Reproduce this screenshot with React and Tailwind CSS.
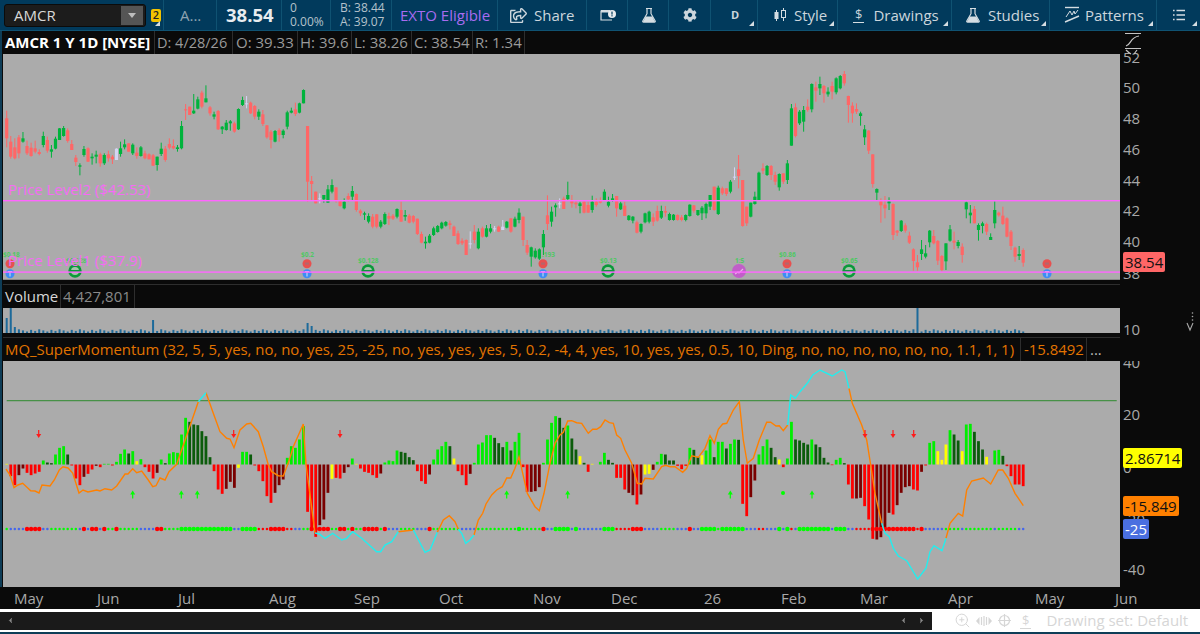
import React from "react";
import { FaCog, FaRegShareSquare } from "react-icons/fa";
import { ZoomIn, ChevronLeft, ChevronRight } from "lucide-react";

// bar spacing on the chart, same for price, volume and study
const barX = (i) => 6.7 + 4.066 * i;

// candle trace: colour, wick top, body top, body bottom, wick bottom (3x crop units)
const CANDLES = `
r 152 175 235 262 r 228 245 290 296 r 235 262 295 298 r 225 232 280 295 g 216 235 245 248 r 242 258 280 285
r 248 263 288 290 r 242 265 275 280 r 268 276 282 286 g 215 228 255 262 r 230 240 272 278 g 255 268 275 293
g 230 236 266 268 g 204 205 240 240 g 198 204 228 230 r 205 211 243 248 r 240 252 270 270 r 285 293 306 318
g 310 316 320 346 g 258 267 285 290 r 262 265 305 306 g 280 290 295 314 g 272 284 290 310 r 278 283 310 320
g 280 285 310 315 r 272 283 295 305 r 285 290 298 312 w 265 266 300 300 g 245 265 282 290 g 238 253 262 268
r 250 250 275 275 g 250 254 280 285 r 262 278 288 296 g 258 262 288 290 r 272 280 295 298 r 280 283 298 298
r 282 286 317 318 g 290 290 315 332 g 248 266 282 288 r 258 266 300 305 r 235 252 263 268 r 238 258 265 268
g 255 262 267 275 g 183 198 265 268 r 132 148 150 180 r 140 140 165 165 g 102 152 160 162 g 110 118 146 148
r 92 98 140 145 g 76 115 127 127 r 138 142 160 167 g 155 163 170 178 r 150 153 208 210 g 198 200 208 222
g 180 188 210 212 g 180 184 190 212 r 185 190 215 218 g 145 147 208 210 g 110 120 135 138 w 108 130 130 145
r 125 128 160 162 r 135 138 170 178 g 148 155 170 180 r 150 163 192 198 r 195 196 232 236 r 210 215 240 265
g 210 213 245 247 r 205 210 225 245 g 208 212 225 235 g 152 157 200 208 g 143 152 158 160 r 128 148 162 168
g 128 130 158 160 g 88 90 130 130 r 198 198 365 425 r 348 363 372 420 r 395 395 430 430 w 400 415 415 430
g 405 405 418 428 g 375 388 428 428 g 358 375 395 400 r 382 382 420 428 r 420 420 438 440 g 415 425 445 448
r 400 408 418 425 g 378 393 410 420 r 400 402 450 455 r 448 452 460 468 g 455 460 464 480 g 460 468 485 490
r 462 470 500 505 r 462 463 500 505 g 480 485 500 505 g 457 462 492 495 r 458 468 476 495 r 462 467 476 480
g 445 447 470 475 r 425 450 485 485 g 450 465 470 482 r 462 467 488 490 r 465 468 485 490 r 476 476 522 525
r 515 522 548 550 g 530 545 550 566 g 522 527 548 550 g 500 505 525 528 g 495 498 516 518 g 485 488 505 508
g 483 486 497 500 r 482 490 495 508 r 497 500 528 528 r 512 520 552 555 r 535 542 550 555 r 538 540 585 585
w 514 550 550 566 r 495 515 540 550 g 505 515 565 568 r 500 505 530 533 g 495 505 530 532 g 492 505 515 520
w 498 505 505 515 r 497 500 515 516 w 480 500 510 510 g 483 485 503 505 r 475 475 515 518 g 470 476 500 502
g 445 458 480 490 r 470 470 540 558 r 540 555 578 585 g 560 562 590 620 g 565 572 592 596 g 565 568 596 600
g 510 522 562 585 r 406 466 492 510 g 440 455 485 500 g 430 436 442 470 w 415 430 432 445 r 410 416 447 447
g 365 405 417 420 r 405 420 430 443 r 420 428 433 445 g 425 430 438 460 r 422 425 458 460 r 425 435 458 458
g 407 425 450 458 r 415 425 435 440 r 412 420 428 430 g 388 395 420 423 g 410 425 437 442 g 402 415 420 425
r 408 408 445 470 g 425 430 448 450 r 425 437 468 468 g 465 467 480 482 g 468 470 482 490 r 482 487 518 520
g 490 492 515 520 g 458 460 487 490 g 452 455 485 490 r 460 472 485 498 r 437 453 482 485 g 437 453 473 477
r 438 453 458 470 g 458 462 480 482 g 462 464 480 482 r 463 465 480 482 r 465 472 480 484 g 463 465 480 484
g 433 434 468 470 r 435 436 452 458 g 450 450 465 468 g 438 443 460 480 g 428 432 460 475 g 405 405 440 450
r 380 380 450 452 g 377 383 462 465 r 380 385 400 405 r 385 385 402 408 g 360 365 395 400 w 322 350 350 360
r 285 328 348 385 r 360 360 498 500 r 440 440 490 498 g 428 428 470 472 g 395 410 432 434 g 335 338 420 420
r 310 325 332 342 g 315 318 345 348 r 315 318 345 360 r 335 345 365 375 g 340 342 382 392 r 340 340 365 372
g 300 310 360 372 g 132 145 257 257 r 130 142 228 232 g 150 155 190 195 g 138 150 185 215 r 118 140 150 155
g 70 72 148 157 r 65 82 92 125 g 50 72 85 105 r 75 78 100 128 g 82 95 103 110 r 65 78 95 118
g 52 55 97 103 g 45 48 85 88 r 33 42 70 77 r 107 108 135 188 r 127 137 160 188 r 130 147 155 162
g 155 160 168 197 g 195 208 232 255 r 210 212 272 282 r 283 283 372 383 g 385 387 398 420 r 415 424 436 488
r 408 434 445 475 g 412 424 430 450 r 430 432 525 540 r 510 512 518 528 g 480 482 513 516 r 490 496 512 518
r 515 527 548 552 r 565 568 603 632 r 585 607 622 632 g 540 568 582 600 g 555 580 590 595 g 510 512 547 562
r 510 528 550 553 r 540 543 602 615 r 585 588 630 634 g 550 550 604 630 g 495 508 542 545 r 515 542 548 568
g 540 546 558 565 r 550 560 585 608 g 425 427 448 475 g 435 458 466 490 r 438 447 490 490 g 490 495 510 542
g 485 490 498 520 r 488 492 515 525 g 520 531 540 540 g 424 450 490 505 r 455 458 466 470 r 440 467 492 495
r 472 475 530 532 r 510 515 558 570 r 560 563 590 605 g 558 582 588 600 r 565 570 608 620
`.trim().split(/\s+/);

const CANDLE_COLORS = { r: "#ff6666", g: "#00b33c", w: "#d4d4f4" };
const toPriceY = (z) => 60 + Number(z) / 3;

const candles = [];
for (let n = 0; n < CANDLES.length; n += 5) {
  candles.push({
    color: CANDLE_COLORS[CANDLES[n]],
    wickTop: toPriceY(CANDLES[n + 1]),
    top: toPriceY(CANDLES[n + 2]),
    bottom: toPriceY(CANDLES[n + 3]),
    wickBottom: toPriceY(CANDLES[n + 4]),
  });
}

// histogram: colour letter + signed height in crop units
const HIST = `
Y2 R-35 R-62 D-32 D-12 R-25 R-32 R-27 R-22 G12
K6 K4 G30 G50 G55 K30 R-3 R-42 R-62 D-37
R-28 R-15 D-4 R-8 G2 G2 R-3 G8 G32 G45
K33 G40 Y10 G16 R-8 R-22 R-42 D-25 G15 K4
G33 G37 G35 G90 G140 K128 K120 K118 K100 K85
K22 R-20 R-75 R-88 D-73 D-52 D-70 Y-10 G38 G38
K30 R-3 R-20 R-50 R-95 R-115 D-85 D-62 D-45 G20
G55 G50 G75 G115 R-142 R-197 R-217 D-182 D-165 D-85
Y-43 R-40 R-42 D-25 D-8 G18 Y2 R-12 R-22 R-25
R-32 R-40 D-27 G6 G12 G10 G42 K38 K35 K22
K13 R-20 R-50 R-58 D-30 G15 G45 G55 G68 K55
Y18 R-20 R-32 R-62 D-28 G5 G60 G66 G88 G88
K80 K64 K52 G68 K42 G68 G95 R-8 R-82 D-82
D-80 D-68 G5 G75 G125 G145 K140 K110 G117 K78
K45 Y25 K5 R-22 Y2 G0 G8 G35 K14 K5
R-40 R-40 R-75 D-85 D-92 R-120 D-90 Y-30 Y-28 D-16
G8 G32 K30 K12 K12 R-4 R-14 R-4 G50 K44
K22 Y28 G42 G75 K22 G68 G68 K48 G62 G75
K74 R-118 R-155 D-98 D-48 G30 G55 G75 K50 K22
Y15 R-8 G18 G128 K75 K72 K65 K60 G75 K60
K52 K20 K6 R-2 G14 G20 K4 R-60 R-102 D-102
D-100 R-125 R-165 R-223 D-225 D-218 D-195 D-145 R-150 D-122
D-85 D-68 D-65 R-75 R-78 D-22 R-3 G65 G70 Y40
Y14 Y60 G103 K90 K72 Y40 G120 G122 K98 K70
K45 Y23 G0 G42 G44 K26 R-5 R-35 R-60 R-60
R-65
`.trim().split(/\s+/);

const HIST_COLORS = { G: "#00ee00", K: "#0b5c0b", R: "#ff0000", D: "#7a0000", Y: "#ffff00" };

// zero-line dots: ranges of bars, lower case small, upper case big
const DOT_RANGES = [
  [0, 0, "g"], [1, 4, "b"], [5, 8, "R"], [9, 10, "b"], [11, 17, "g"], [18, 18, "b"], [19, 19, "R"], [20, 20, "b"],
  [21, 22, "R"], [23, 23, "b"], [24, 24, "R"], [25, 26, "g"], [27, 27, "R"], [28, 32, "g"], [33, 36, "b"],
  [37, 38, "R"], [39, 42, "g"], [43, 55, "G"], [56, 57, "b"], [58, 61, "G"], [62, 64, "r"], [65, 68, "R"],
  [69, 70, "r"], [71, 72, "b"], [73, 74, "g"], [75, 79, "R"], [80, 81, "g"], [82, 83, "R"], [84, 84, "g"],
  [85, 85, "R"], [86, 87, "g"], [88, 91, "R"], [92, 92, "g"], [93, 93, "R"], [94, 96, "b"], [97, 100, "g"],
  [101, 103, "b"], [104, 104, "R"], [105, 111, "g"], [112, 115, "b"], [116, 125, "g"], [126, 126, "G"],
  [127, 131, "g"], [132, 132, "R"], [133, 134, "b"], [135, 138, "G"], [139, 139, "b"], [140, 140, "G"],
  [141, 146, "b"], [147, 149, "G"], [150, 153, "r"], [154, 156, "R"], [157, 160, "b"], [161, 164, "g"],
  [165, 167, "b"], [168, 168, "R"], [169, 170, "b"], [171, 174, "G"], [175, 175, "g"], [176, 181, "G"],
  [182, 184, "b"], [185, 186, "r"], [187, 189, "b"], [190, 190, "G"], [191, 191, "b"], [192, 192, "G"],
  [193, 193, "r"], [194, 194, "b"], [195, 202, "G"], [203, 203, "b"], [204, 206, "G"], [207, 208, "b"],
  [209, 212, "r"], [213, 223, "R"], [224, 224, "r"], [225, 225, "R"], [226, 230, "b"], [231, 234, "g"],
  [235, 235, "b"], [236, 242, "g"], [243, 243, "b"], [244, 248, "g"], [249, 250, "b"],
];
const DOT_COLORS = { g: "#00ff00", b: "#4466ee", r: "#ff0000" };

const dots = [];
DOT_RANGES.forEach(([from, to, kind]) => {
  for (let i = from; i <= to; i++) {
    const lower = kind.toLowerCase();
    dots.push({ i, color: DOT_COLORS[lower], big: kind !== lower });
  }
});

// study line pieces, picture coordinates
const ORANGE_LINES = [
  "6,469 10,475 14,487.7 18,485 22.7,483.3 26.7,487 30.7,490.7 35,491 39,493 42,485 50,486 54.3,480 59.3,470 63,466.7 68,468 72.7,473 79,493 83,490 88,492 96.7,490 100,491 105,488.7 111.7,490 116.7,486 125,474 128,474 132.7,468.7 136.7,472.7 141.7,471 148.3,480 152.7,486.7 156,485.7 160,478 165,480 169,471.7 176.7,464.3 198.3,401.7",
  "206,392.7 213.3,413.3 220,431.7 226.7,438.3 230,439 234,447.7 240,430 246.7,424 250.7,423.3 258.3,431.7 263.3,446.7 268.3,465 271.7,471.7 278.3,475.7 283.3,476 289.3,460 293.3,446.7 303.3,424 306,464.3 315,533",
  "398.3,531.7 413.3,530",
  "437.3,532.3 443.3,520 449.3,515.7 455,521.7 458.3,529.3",
  "474,535 478.3,520 482.7,513.3 486,504 491.7,495 496.7,490 502.3,486.7 506.7,478 510.7,478 515,468.3 519,456.7 522.7,473.3 527.3,493.3 535,506.7 539.3,510.7 544,493.3 550,463.3 555,443.3 560,435 563.3,432.3 567.7,421 571.7,420.7 576.7,422.7 581.7,423.3 588.3,433.3 592.7,429.3 596.7,429.3 600.7,426.7 605,420 609.3,422.7 613.3,423.3 616.7,435 620.7,438.3 625,450 631.7,463.3 637.3,483.3 641.7,484 645,478.3 653.3,479 661.7,466.7 665.7,465.3 670,466.7 675,466.7 682.7,472.3 686.7,468.3 691.7,455.7 698.3,457.3 705,448.3 710,435.7 714.3,443.3 718.3,429.3 722.7,424 726.7,423.3 733.3,410 739.3,401.7 743.3,440 747.3,463.3 753.3,458.3 759.3,440 766.7,422.3 770.7,422.3 776,426 779.3,425.7 783.3,430.7 787.7,425",
  "849,388.3 852.3,403.3 861.7,425 866.7,440 870.7,465 875,493.3 881.7,523.3",
  "946,538.3 950,523.3 958.3,513.3 962.7,516 966.7,490 971.7,481 983.3,478 990.7,484 998.3,470 1002.7,470 1008.3,478.3 1015,493.3 1023.3,505.7",
];
const CYAN_LINES = [
  "198.3,401.7 206,392.7",
  "315,533 319.3,534 325,538.3 332.7,533.3 341.7,540 346.7,538.3 352.7,531.7 361.7,538.3 376.7,551.7 380.7,551.7 385,545 391.7,541.7 398.3,531.7",
  "413.3,530 425,552.3 430,550 437.3,532.3",
  "458.3,529.3 461.7,533.3 465.7,543.3 470,540 474,535",
  "787.7,425 790.7,395 795.3,398.3 800,391.7 807.3,383.3 812.7,375 820,370 832.3,376 841.7,370 845,371.7 849,388.3",
  "881.7,523.3 885,533.3 889.3,536.7 893.3,548.3 898.3,556 906.7,560.7 917.7,579 926,568.3 930,551.7 934,545.7 942,550.7 946,538.3",
];

const volumeHeight = (i) => {
  const spikes = { 0: 15, 1: 25, 2: 6, 36: 13, 74: 10, 75: 7, 224: 25 };
  if (spikes[i]) return spikes[i];
  return 1.5 + ((i * 13) % 5) * 0.55;
};

const MONTHS = [
  ["May", 14], ["Jun", 97], ["Jul", 178], ["Aug", 269], ["Sep", 354], ["Oct", 439], ["Nov", 533],
  ["Dec", 611], ["26", 704], ["Feb", 781], ["Mar", 860], ["Apr", 948], ["May", 1035], ["Jun", 1115],
];

const AXIS_LABELS = [
  ["52", 63], ["50", 93], ["48", 124], ["46", 155], ["44", 186], ["42", 216], ["40", 247], ["38", 279],
  ["10", 335], ["40", 368], ["20", 420], ["0", 473], ["-20", 525], ["-40", 575],
];

const Corner = () => (
  <svg className="absolute bottom-[4px] right-[3px]" width="5" height="5" viewBox="0 0 5 5">
    <path d="M5 0V5H0Z" fill="#d5dde2" />
  </svg>
);

const Flask = ({ size = 16 }) => (
  <svg width={size} height={size} viewBox="0 0 16 16">
    <path d="M5 1.5h6M6 1.5v5.2L1.8 14a.8.8 0 0 0 .7 1.2h11a.8.8 0 0 0 .7-1.2L10 6.7V1.5" fill="none" stroke="#d5dde2" strokeWidth="1.2" />
    <path d="M4.6 9.5h6.8l2.6 5.5H2Z" fill="#d5dde2" />
  </svg>
);

const ToolCell = ({ className, children }) => (
  <div className={`relative flex h-full shrink-0 items-center border-r border-[#0f5272] ${className}`}>
    {children}
  </div>
);

const Legend = ({ className, children }) => (
  <div className={`flex h-full shrink-0 items-center whitespace-nowrap border-r border-[#2e2e2e] ${className}`}>{children}</div>
);

const PriceChart = () => (
  <svg className="block" width="1117" height="225" viewBox="3 54 1117 225">
    {candles.map((c, i) => (
      <g key={i}>
        <rect x={barX(i) - 0.5} y={c.wickTop} width="1" height={c.wickBottom - c.wickTop} fill={c.color} />
        <rect x={barX(i) - 1.6} y={c.top} width="3.2" height={Math.max(c.bottom - c.top, 1)} fill={c.color} />
      </g>
    ))}

    {/* dividend / earnings markers */}
    {[10, 307, 543, 787, 1047].map((x) => (
      <g key={x}>
        <circle cx={x} cy="263.7" r="4.5" fill="#e8504f" />
        <rect x={x - 2} y="262.5" width="4" height="2.2" fill="#b5656a" />
        <circle cx={x} cy="273.7" r="4.5" fill="#3f8cf5" />
        <path d={`M${x - 2} 271.5h4M${x} 271.5v5`} stroke="#bcd2ee" strokeWidth="1.2" />
      </g>
    ))}
    {[75, 368, 608, 849].map((x) => (
      <g key={x}>
        <circle cx={x} cy="271" r="6.7" fill="#0a9a3a" />
        <circle cx={x} cy="271" r="4" fill="#a5c4ab" />
        <rect x={x - 5} y="270" width="10" height="2" fill="#0a9a3a" />
      </g>
    ))}
    <circle cx="739" cy="271" r="7" fill="#c15ec9" />
    <path d="M735 274l3-2 1 1 4-4" fill="none" stroke="#e4b6e6" strokeWidth="1.2" />

    <g fill="#4fc864" fontSize="6.5" fontWeight="700">
      <text x="3" y="257">$0.18</text>
      <text x="66" y="263">$0.128</text>
      <text x="301" y="257">$0.2</text>
      <text x="358" y="263">$0.128</text>
      <text x="542" y="257">.193</text>
      <text x="600" y="263">$0.13</text>
      <text x="735" y="263">1:5</text>
      <text x="779" y="257">$0.86</text>
      <text x="841" y="263">$0.65</text>
    </g>

    <rect x="3" y="200" width="1117" height="1.4" fill="#ff66ff" />
    <rect x="3" y="271.4" width="1117" height="1.4" fill="#ff66ff" />
    <text x="8" y="195" fontSize="15" fill="#f46cf4">Price Level2 ($42.53)</text>
    <text x="8" y="266" fontSize="15" fill="#f46cf4">Price Level1 ($37.9)</text>
  </svg>
);

const VolumeChart = () => (
  <svg className="block" width="1117" height="25" viewBox="3 308 1117 25">
    {candles.map((_, i) => (
      <rect key={i} x={barX(i) - 1} y={333 - volumeHeight(i)} width="2" height={volumeHeight(i)} fill="#1d6a9a" />
    ))}
  </svg>
);

const StudyChart = () => (
  <svg className="block" width="1117" height="226" viewBox="3 361 1117 226">
    <rect x="6.7" y="400.2" width="1110" height="1" fill="#2e8b2e" />

    {HIST.map((token, i) => {
      const value = Number(token.slice(1)) / 3;
      return (
        <rect
          key={i}
          x={barX(i) - 1.4}
          y={value > 0 ? 464.5 - value : 464.5}
          width="2.8"
          height={Math.abs(value)}
          fill={HIST_COLORS[token[0]]}
        />
      );
    })}

    {dots.map((d) => (
      <circle key={d.i} cx={barX(d.i)} cy="529" r={d.big ? 2.2 : 1.25} fill={d.color} />
    ))}
    <circle cx="783" cy="493" r="2" fill="#00ff00" />

    {ORANGE_LINES.map((points) => (
      <polyline key={points} points={points} fill="none" stroke="#ff8000" strokeWidth="1.4" />
    ))}
    {CYAN_LINES.map((points) => (
      <polyline key={points} points={points} fill="none" stroke="#22eeee" strokeWidth="1.4" />
    ))}

    {/* sell arrows */}
    {[38.7, 233.7, 340, 865, 893, 913.7].map((x) => (
      <path key={x} d={`M${x - 0.6} 430h1.2v4h1.9l-2.5 4-2.5-4h1.9z`} fill="#ff1a1a" />
    ))}
    {/* buy arrows */}
    {[132.7, 181.3, 197.3, 506.7, 567.7, 730.3, 812].map((x) => (
      <path key={x} d={`M${x - 0.6} 498.5h1.2v-4h1.9l-2.5-4-2.5 4h1.9z`} fill="#00ff00" />
    ))}
  </svg>
);

const RightAxis = () => (
  <svg className="block" width="80" height="556" viewBox="1120 31 80 556">
    {AXIS_LABELS.map(([label, y]) => (
      <text key={label + y} x="1123" y={y} fontSize="15" fill="#a8a8a8">
        {label}
      </text>
    ))}
    {/* clip labels at the panel edges */}
    <rect x="1120" y="31" width="80" height="21" fill="#0a0a0a" />
    <rect x="1120" y="335" width="80" height="26" fill="#0a0a0a" />

    <g fill="none" stroke="#c4c4c4" strokeWidth="1.2">
      <path d="M1125 33.5h16M1125 48.5h16M1126 46c5-1 4-9 13-10" />
      <path d="M1126 50c2 2 3 3 5 4M1134 54l3-4" />
    </g>

    <g fill="none" stroke="#a8a8a8" strokeWidth="1.1">
      <path d="M1187 323l3 7 3-7" />
    </g>
    <g fill="#a8a8a8">
      <circle cx="1192.5" cy="313" r="0.8" />
      <circle cx="1192.5" cy="316.5" r="0.8" />
      <circle cx="1192.5" cy="320" r="0.8" />
    </g>
  </svg>
);

const AxisBadge = ({ className, children }) => (
  <div className={`absolute left-[3px] flex h-[20px] items-center rounded-[2px] px-[2px] text-[15px] leading-none ${className}`}>
    {children}
  </div>
);

export default function App() {
  return (
    <div className="flex h-[634px] w-[1200px] flex-col overflow-hidden bg-[#0a0a0a] font-['Open_Sans',sans-serif]">

      {/* ===== Toolbar ===== */}
      <div className="flex h-[31px] shrink-0 items-center border-b border-[#0f5272] bg-[#013a5c] text-[#ccd6dd]">
        <ToolCell className="w-[164px] pl-[4px]">
          <div className="flex h-[23px] w-[142px] items-center justify-between rounded-[3px] border border-[#0b0b0b] bg-[#1c1c1c] pl-[9px] pr-[2px]">
            <span className="text-[15px] text-[#d8d8d8]">AMCR</span>
            <div className="flex h-[19px] w-[22px] items-center justify-center bg-[#555555]">
              <span className="border-x-[4px] border-t-[5px] border-x-transparent border-t-[#bdbdbd]" />
            </div>
          </div>
          <span className="ml-[5px] flex h-[13px] w-[10px] items-center justify-center rounded-[2px] bg-[#f2c200] text-[11px] font-semibold text-[#222]">
            2
          </span>
          <Corner />
        </ToolCell>
        <ToolCell className="w-[53px] pl-[16px] text-[15px] text-[#8ea3b1]">A...</ToolCell>
        <ToolCell className="w-[65px] pl-[9px] text-[18.5px] font-bold text-[#e8ecef]">38.54</ToolCell>
        <ToolCell className="w-[49px] flex-col !items-start justify-center pl-[8px] text-[12px] leading-[14px] text-[#b5c2cb]">
          <span>0</span>
          <span>0.00%</span>
        </ToolCell>
        <ToolCell className="w-[61px] flex-col !items-start justify-center pl-[9px] text-[12px] leading-[14px] text-[#b5c2cb]">
          <span>B: 38.44</span>
          <span>A: 39.07</span>
        </ToolCell>
        <ToolCell className="w-[106px] pl-[8px] text-[15px] text-[#a86cf0]">EXTO Eligible</ToolCell>
        <ToolCell className="w-[89px] pl-[12px] text-[15px]">
          <FaRegShareSquare size={17} />
          <span className="ml-[7px]">Share</span>
        </ToolCell>
        <ToolCell className="w-[41px] pl-[13px]">
          <svg width="16" height="14" viewBox="0 0 16 14">
            <path d="M1 2.5h9M1 2.5v9.5h11" fill="none" stroke="#d5dde2" strokeWidth="1.2" />
            <rect x="1" y="2" width="8" height="2.5" fill="#d5dde2" />
            <circle cx="12" cy="6" r="4" fill="#e8ecef" />
            <rect x="11.4" y="3.6" width="1.2" height="3" fill="#013a5c" />
            <rect x="11.4" y="7.2" width="1.2" height="1.2" fill="#013a5c" />
          </svg>
        </ToolCell>
        <ToolCell className="w-[41px] pl-[13px]">
          <Flask />
        </ToolCell>
        <ToolCell className="w-[42px] pl-[14px]">
          <FaCog size={14} />
        </ToolCell>
        <ToolCell className="w-[47px] pl-[20px] text-[11px] font-bold">
          D
          <Corner />
        </ToolCell>
        <ToolCell className="w-[80px] pl-[15px] text-[15px]">
          <svg width="14" height="16" viewBox="0 0 14 16">
            <path d="M3.5 3v11M10.5 1v13" stroke="#d5dde2" strokeWidth="1" />
            <rect x="1.5" y="5" width="4" height="7" fill="#d5dde2" />
            <rect x="8.5" y="3.5" width="4" height="7" fill="#013a5c" stroke="#d5dde2" />
          </svg>
          <span className="ml-[7px]">Style</span>
          <Corner />
        </ToolCell>
        <ToolCell className="w-[114px] pl-[15px] text-[15px]">
          <span className="border-b border-[#d5dde2] px-[2px] text-[13px] leading-[15px]">$</span>
          <span className="ml-[9px]">Drawings</span>
          <Corner />
        </ToolCell>
        <ToolCell className="w-[98px] pl-[13px] text-[15px]">
          <Flask />
          <span className="ml-[7px]">Studies</span>
          <Corner />
        </ToolCell>
        <ToolCell className="w-[107px] pl-[14px] text-[15px]">
          <svg width="16" height="18" viewBox="0 0 16 18">
            <path d="M1 1.5h14" stroke="#d5dde2" strokeWidth="1.4" />
            <path d="M2 11l4-6 2 4 2-4 1 3 3-4" fill="none" stroke="#d5dde2" strokeWidth="1" />
            <path d="M1 16l14-6" stroke="#d5dde2" strokeWidth="1.4" />
          </svg>
          <span className="ml-[5px]">Patterns</span>
          <Corner />
        </ToolCell>
        <div className="relative flex h-full flex-1 items-center pl-[16px]">
          <svg width="12" height="12" viewBox="0 0 12 12">
            <path d="M0 1.5h1.6M0 6h1.6M0 10.5h1.6M3.5 1.5H12M3.5 6H12M3.5 10.5H12" stroke="#d5dde2" strokeWidth="1.3" />
          </svg>
          <Corner />
        </div>
      </div>

      {/* ===== Chart panels + price axis ===== */}
      <div className="flex h-[556px] shrink-0">
        <div className="w-[2px] shrink-0 bg-[#0e3d57]" />
        <div className="flex w-[1118px] shrink-0 flex-col pl-[1px]">

          <div className="flex h-[23px] shrink-0 items-center text-[15px] text-[#9a9a9a]">
            <Legend className="w-[152px] pl-[2px] font-bold text-white">AMCR 1 Y 1D [NYSE]</Legend>
            <Legend className="w-[78px] pl-[2px] text-[14.5px]">D: 4/28/26</Legend>
            <Legend className="w-[65px] pl-[3px]">O: 39.33</Legend>
            <Legend className="w-[54px] pl-[2px]">H: 39.6</Legend>
            <Legend className="w-[60px] pl-[2px]">L: 38.26</Legend>
            <Legend className="w-[61px] pl-[2px]">C: 38.54</Legend>
            <Legend className="w-[52px] pl-[2px]">R: 1.34</Legend>
          </div>
          <div className="h-[225px] shrink-0 bg-[#ababab]">
            <PriceChart />
          </div>

          <div className="h-[1px] shrink-0 bg-[#8a8a8a]" />
          <div className="mt-[4px] flex h-[24px] shrink-0 items-center border-t border-[#2e2e2e] text-[15px]">
            <Legend className="w-[58px] pl-[2px] text-[#d8d8d8]">Volume</Legend>
            <Legend className="w-[74px] pl-[2px] text-[#8a8a8a]">4,427,801</Legend>
          </div>
          <div className="h-[25px] shrink-0 bg-[#ababab]">
            <VolumeChart />
          </div>

          <div className="mt-[4px] flex h-[24px] shrink-0 items-center border-t border-[#2e2e2e] text-[14.9px] text-[#e37400]">
            <Legend className="w-[1018px] pl-[2px]">
              MQ_SuperMomentum (32, 5, 5, yes, no, no, yes, 25, -25, no, yes, yes, yes, 5, 0.2, -4, 4, yes, 10, yes, yes, 0.5, 10, Ding, no, no, no, no, no, no, 1.1, 1, 1)
            </Legend>
            <Legend className="w-[66px] pl-[3px]">-15.8492</Legend>
            <span className="pl-[3px] text-[#bdbdbd]">...</span>
          </div>
          <div className="h-[226px] shrink-0 bg-[#ababab]">
            <StudyChart />
          </div>
        </div>

        <div className="relative w-[80px] shrink-0">
          <RightAxis />
          {/* current value tags */}
          <AxisBadge className="top-[221px] bg-[#ff6666] text-[#111]">38.54</AxisBadge>
          <AxisBadge className="top-[417px] bg-[#ffff00] text-[#111]">2.86714</AxisBadge>
          <AxisBadge className="top-[465px] bg-[#ff8000] text-[#111]">-15.849</AxisBadge>
          <AxisBadge className="top-[488px] bg-[#4a6fe0] text-white">-25</AxisBadge>
        </div>
      </div>

      {/* ===== Time axis ===== */}
      <svg className="block shrink-0" width="1200" height="21" viewBox="0 587 1200 21">
        {MONTHS.map(([label, x]) => (
          <text key={label + x} x={x} y="604" fontSize="15" fill="#a8a8a8">
            {label}
          </text>
        ))}
      </svg>

      {/* ===== Scrollbar + drawing set ===== */}
      <div className="mt-[1px] flex h-[23px] shrink-0 items-center bg-white">
        <div className="flex h-[18px] w-[932px] shrink-0 items-center justify-between bg-[#1a1a1a] pl-[6px] pr-[6px] text-[#8a8a8a]">
          <ChevronLeft size={9} fill="#8a8a8a" />
          <div className="flex gap-[9px]">
            <ChevronLeft size={9} fill="#8a8a8a" />
            <ChevronRight size={9} fill="#8a8a8a" />
          </div>
        </div>
        <div className="ml-[22px] flex items-center text-[#d6d6d6]">
          <ZoomIn size={17} strokeWidth={1.4} />
          <svg className="ml-[5px]" width="16" height="12" viewBox="0 0 16 12">
            <path d="M0 6l3.5-4v8zM16 6l-3.5-4v8z" fill="currentColor" />
            <path d="M5.5 2v8M8 1v10M10.5 2v8" stroke="currentColor" strokeWidth="1.2" />
          </svg>
          <svg className="ml-[6px]" width="13" height="13" viewBox="0 0 13 13">
            <circle cx="6.5" cy="6.5" r="5" fill="none" stroke="currentColor" strokeWidth="1.2" />
            <path d="M0 6.5h13M6.5 0v13" stroke="currentColor" strokeWidth="1.2" />
          </svg>
          <span className="ml-[9px] border-b border-current px-[2px] text-[13px] leading-[15px]">$</span>
          <span className="ml-[15px] text-[15px]">Drawing set: Default</span>
        </div>
      </div>
      <div className="flex-1 bg-[#0e3d57]" />
    </div>
  );
}
